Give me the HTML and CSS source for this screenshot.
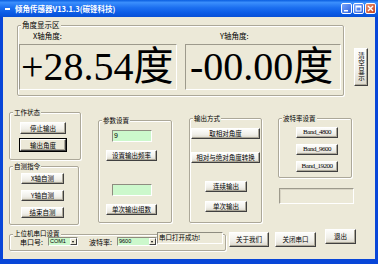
FILE: index.html
```html
<!DOCTYPE html>
<html lang="zh-CN">
<head>
    <meta charset="UTF-8">
    <meta name="viewport" content="width=device-width, initial-scale=1.0">
    <title>倾角传感器</title>
    <link rel="stylesheet" href="styles.css">
</head>
<body>
    <div class="window">
        <div class="titlebar">
            <span class="app-icon"></span>
            <span class="title">倾角传感器V13.1.3(碳锋科技)</span>
            <div class="controls">
                <span class="ctl">
                    <svg width="9" height="9" viewBox="0 0 9 9"><rect x="2" y="6" width="4" height="1.5" fill="#fff"/></svg>
                </span>
                <span class="ctl">
                    <svg width="9" height="9" viewBox="0 0 9 9"><rect x="2" y="2" width="5" height="5" fill="none" stroke="#fff" stroke-width="1"/><rect x="2" y="2" width="5" height="1.5" fill="#fff"/></svg>
                </span>
                <span class="ctl ctl-close">
                    <svg width="9" height="9" viewBox="0 0 9 9"><path d="M2 2 L7 7 M7 2 L2 7" stroke="#fff" stroke-width="1.4"/></svg>
                </span>
            </div>
        </div>

        <div class="client">
            <!-- angle display -->
            <div class="row-top">
                <div class="group angle-group">
                    <span class="group-label big-label">角度显示区</span>
                    <div class="axis axis-x">
                        <div class="axis-label">X轴角度:</div>
                        <div class="display">+28.54度</div>
                    </div>
                    <div class="axis axis-y">
                        <div class="axis-label">Y轴角度:</div>
                        <div class="display">-00.00度</div>
                    </div>
                </div>
                <button class="btn btn-clear"><span class="vtext">清空显示</span></button>
            </div>

            <div class="row-mid">
                <div class="col col-1">
                    <div class="group work-group">
                        <span class="group-label">工作状态</span>
                        <button class="btn btn-work">停止输出</button>
                        <button class="btn btn-work btn-default">输出角度</button>
                    </div>
                    <div class="group test-group">
                        <span class="group-label">自测指令</span>
                        <button class="btn btn-test">X轴自测</button>
                        <button class="btn btn-test">Y轴自测</button>
                        <button class="btn btn-test">结束自测</button>
                    </div>
                </div>

                <div class="group param-group">
                    <span class="group-label">参数设置</span>
                    <div class="textbox">9</div>
                    <button class="btn btn-param">设置输出频率</button>
                    <div class="textbox textbox-2"></div>
                    <button class="btn btn-param">单次输出组数</button>
                </div>

                <div class="group output-group">
                    <span class="group-label">输出方式</span>
                    <button class="btn btn-wide">取相对角度</button>
                    <button class="btn btn-wide btn-convert">相对与绝对角度转换</button>
                    <button class="btn btn-mode btn-continuous">连续输出</button>
                    <button class="btn btn-mode btn-single">单次输出</button>
                </div>

                <div class="col col-4">
                    <div class="group baud-group">
                        <span class="group-label">波特率设置</span>
                        <button class="btn btn-baud">Band_4800</button>
                        <button class="btn btn-baud">Band_9600</button>
                        <button class="btn btn-baud">Band_19200</button>
                    </div>
                    <div class="empty-box"></div>
                </div>
            </div>

            <div class="row-bottom">
                <div class="group serial-group">
                    <span class="group-label">上位机串口设置</span>
                    <span class="field-label">串口号:</span>
                    <div class="combo combo-port"><span class="combo-text">COM1</span><span class="combo-arrow"></span></div>
                    <span class="field-label field-baud">波特率:</span>
                    <div class="combo combo-baud"><span class="combo-text">9600</span><span class="combo-arrow"></span></div>
                    <div class="status">串口打开成功!</div>
                </div>
                <button class="btn btn-about">关于我们</button>
                <button class="btn btn-close-port">关闭串口</button>
                <button class="btn btn-exit">退出</button>
            </div>
        </div>
    </div>
</body>
</html>
```

FILE: styles.css
```css
body {
    margin: 0;
    padding: 0;
    font-family: "Noto Sans CJK SC", sans-serif;
    background-color: #ece9d8;
}
.window {
    width: 378px;
    height: 264px;
    display: flex;
    flex-direction: column;
    overflow: hidden;
}
.titlebar {
    height: 17px;
    flex: none;
    display: flex;
    align-items: center;
    background: linear-gradient(#0a5ee0, #3b8ffc 15%, #1c6ff0 45%, #0b5ce6 75%, #0750d6);
    color: #fff;
}
.app-icon {
    width: 5px;
    height: 2px;
    margin-left: 5px;
    background-color: #fff;
}
.title {
    margin-left: 5px;
    font-size: 7.5px;
    font-weight: bold;
    line-height: 10px;
    white-space: nowrap;
}
.controls {
    margin-left: auto;
    margin-right: 2px;
    display: flex;
    gap: 1px;
}
.ctl {
    width: 11px;
    height: 11px;
    box-sizing: border-box;
    border: 1px solid #fff;
    border-radius: 2px;
    background: linear-gradient(135deg, #7aa6fa, #2a5fe0);
    display: flex;
    align-items: center;
    justify-content: center;
}
.ctl-close {
    background: linear-gradient(135deg, #eb9473, #c53e1b);
}
.client {
    flex: 1;
    border-left: 3px solid #0846d8;
    border-right: 3px solid #0846d8;
    border-bottom: 5px solid #0846d8;
    background-color: #ece9d8;
}

/* group boxes */
.group {
    position: relative;
    box-sizing: border-box;
    border: 1px solid #aca899;
    border-radius: 2px;
    box-shadow: inset 1px 1px 0 #fff, 1px 1px 0 #fff;
}
.group-label {
    position: absolute;
    top: -4px;
    left: 3px;
    padding: 0 1px;
    font-size: 6.5px;
    line-height: 7px;
    background-color: #ece9d8;
    white-space: nowrap;
}
.big-label {
    font-size: 7.5px;
    line-height: 8px;
    top: -5px;
}

/* buttons */
.btn {
    box-sizing: border-box;
    margin: 0;
    padding: 0;
    display: flex;
    align-items: center;
    justify-content: center;
    font-family: "Noto Sans CJK SC", sans-serif;
    font-size: 6.5px;
    line-height: 1;
    color: #000;
    white-space: nowrap;
    background: linear-gradient(#fdfdfb, #f0efe9 60%, #dcd8cc);
    border: 1px solid;
    border-color: #fff #404040 #404040 #fff;
    box-shadow: inset -1px -1px 0 #aca899;
}
.btn-default {
    outline: 1px solid #000;
    background: #ece9d8;
}

/* top row */
.row-top {
    display: flex;
    align-items: flex-start;
    margin-top: 8px;
    padding-left: 14px;
}
.angle-group {
    width: 327px;
    height: 71px;
    display: flex;
    padding: 5px 0 0 1px;
}
.axis-x {
    width: 158px;
}
.axis-y {
    width: 156px;
    margin-left: 8px;
}
.axis-label {
    font-size: 7.5px;
    line-height: 10px;
    height: 10px;
}
.axis-x .axis-label {
    margin-left: 14px;
}
.axis-y .axis-label {
    margin-left: 35px;
}
.display {
    box-sizing: border-box;
    margin-top: 3px;
    height: 46px;
    padding-left: 1px;
    border: 1px solid;
    border-color: #9d9a8c #fff #fff #9d9a8c;
    font-family: "Liberation Serif", "Noto Sans CJK SC", serif;
    font-size: 40px;
    line-height: 44px;
    white-space: nowrap;
    overflow: hidden;
}
.axis-y .display {
    padding-left: 4px;
}
.btn-clear {
    margin-left: 10px;
    margin-top: 23px;
    width: 14px;
    height: 38px;
}
.vtext {
    writing-mode: vertical-rl;
    font-size: 6.5px;
    line-height: 7px;
    letter-spacing: 1px;
}

/* middle row */
.row-mid {
    display: flex;
    align-items: flex-start;
    margin-top: 16px;
    padding-left: 6px;
}
.col {
    display: flex;
    flex-direction: column;
    align-items: flex-start;
}
.work-group {
    width: 72px;
    height: 48px;
    padding: 9px 0 0 10px;
}
.btn-work {
    width: 46px;
    height: 12px;
}
.btn-work + .btn-work {
    margin-top: 5px;
}
.test-group {
    margin-top: 6px;
    width: 70px;
    height: 59px;
    padding: 6px 0 0 11px;
}
.btn-test {
    width: 43px;
    height: 11px;
}
.btn-test + .btn-test {
    margin-top: 6px;
}

.param-group {
    margin-left: 17px;
    margin-top: 8px;
    width: 74px;
    height: 103px;
    padding: 9px 0 0 7px;
}
.textbox {
    box-sizing: border-box;
    margin-left: 6px;
    width: 40px;
    height: 12px;
    border: 1px solid;
    border-color: #8e8c80 #fff #fff #8e8c80;
    background-color: #ccf8cc;
    font-family: "Liberation Sans", sans-serif;
    font-size: 7px;
    line-height: 10px;
    padding-left: 1px;
}
.textbox-2 {
    margin-top: 23px;
}
.btn-param {
    width: 51px;
    height: 11px;
    margin-top: 8px;
}

.output-group {
    margin-left: 17px;
    margin-top: 6px;
    width: 73px;
    height: 105px;
    padding: 9px 0 0 1px;
}
.btn-wide {
    width: 69px;
    height: 11px;
}
.btn-convert {
    margin-top: 13px;
}
.btn-mode {
    width: 42px;
    height: 11px;
    margin-left: 14px;
}
.btn-continuous {
    margin-top: 18px;
}
.btn-single {
    margin-top: 9px;
}

.col-4 {
    margin-left: 16px;
    margin-top: 6px;
}
.baud-group {
    width: 74px;
    height: 60px;
    padding: 8px 0 0 17px;
}
.btn-baud {
    width: 42px;
    height: 11px;
    font-family: "Liberation Serif", serif;
    font-size: 7px;
    letter-spacing: -0.5px;
}
.btn-baud + .btn-baud {
    margin-top: 6px;
}
.empty-box {
    box-sizing: border-box;
    margin-top: 10px;
    margin-left: 1px;
    width: 75px;
    height: 16px;
    border: 1px solid;
    border-color: #9d9a8c #fff #fff #9d9a8c;
    box-shadow: 1px 1px 0 #d8d4c4 inset;
}

/* bottom row */
.row-bottom {
    display: flex;
    align-items: flex-start;
    margin-top: 4px;
    padding-left: 6px;
}
.serial-group {
    margin-top: 5px;
    width: 217px;
    height: 17px;
    display: flex;
    align-items: flex-start;
    padding-left: 10px;
}
.serial-group .group-label {
    top: -5px;
}
.field-label {
    width: 28px;
    margin-top: 3px;
    font-size: 7px;
    line-height: 8px;
}
.field-baud {
    margin-left: 11px;
}
.combo {
    box-sizing: border-box;
    margin-top: 2px;
    height: 9px;
    display: flex;
    border: 1px solid;
    border-color: #8e8c80 #fff #fff #8e8c80;
    background-color: #ccf8cc;
}
.combo-port {
    width: 30px;
}
.combo-baud {
    width: 40px;
}
.combo-text {
    flex: 1;
    font-family: "Liberation Sans", sans-serif;
    font-size: 5.5px;
    line-height: 7px;
    padding-left: 1px;
}
.combo-arrow {
    position: relative;
    width: 7px;
    background-color: #ece9d8;
    box-sizing: border-box;
    border: 1px solid;
    border-color: #fff #404040 #404040 #fff;
}
.combo-arrow::after {
    content: "";
    position: absolute;
    left: 1px;
    top: 2px;
    border-left: 1.5px solid transparent;
    border-right: 1.5px solid transparent;
    border-top: 2px solid #000;
}
.status {
    box-sizing: border-box;
    margin-top: -3px;
    width: 66px;
    height: 12px;
    border: 1px solid;
    border-color: #8e8c80 #fff #fff #8e8c80;
    background-color: #ece9d8;
    font-size: 6.5px;
    line-height: 9px;
    padding-left: 1px;
    white-space: nowrap;
}
.btn-about {
    margin-left: 3px;
    margin-top: 3px;
    width: 40px;
    height: 15px;
}
.btn-close-port {
    margin-left: 6px;
    margin-top: 3px;
    width: 41px;
    height: 15px;
}
.btn-exit {
    margin-left: 9px;
    width: 31px;
    height: 15px;
}
```
